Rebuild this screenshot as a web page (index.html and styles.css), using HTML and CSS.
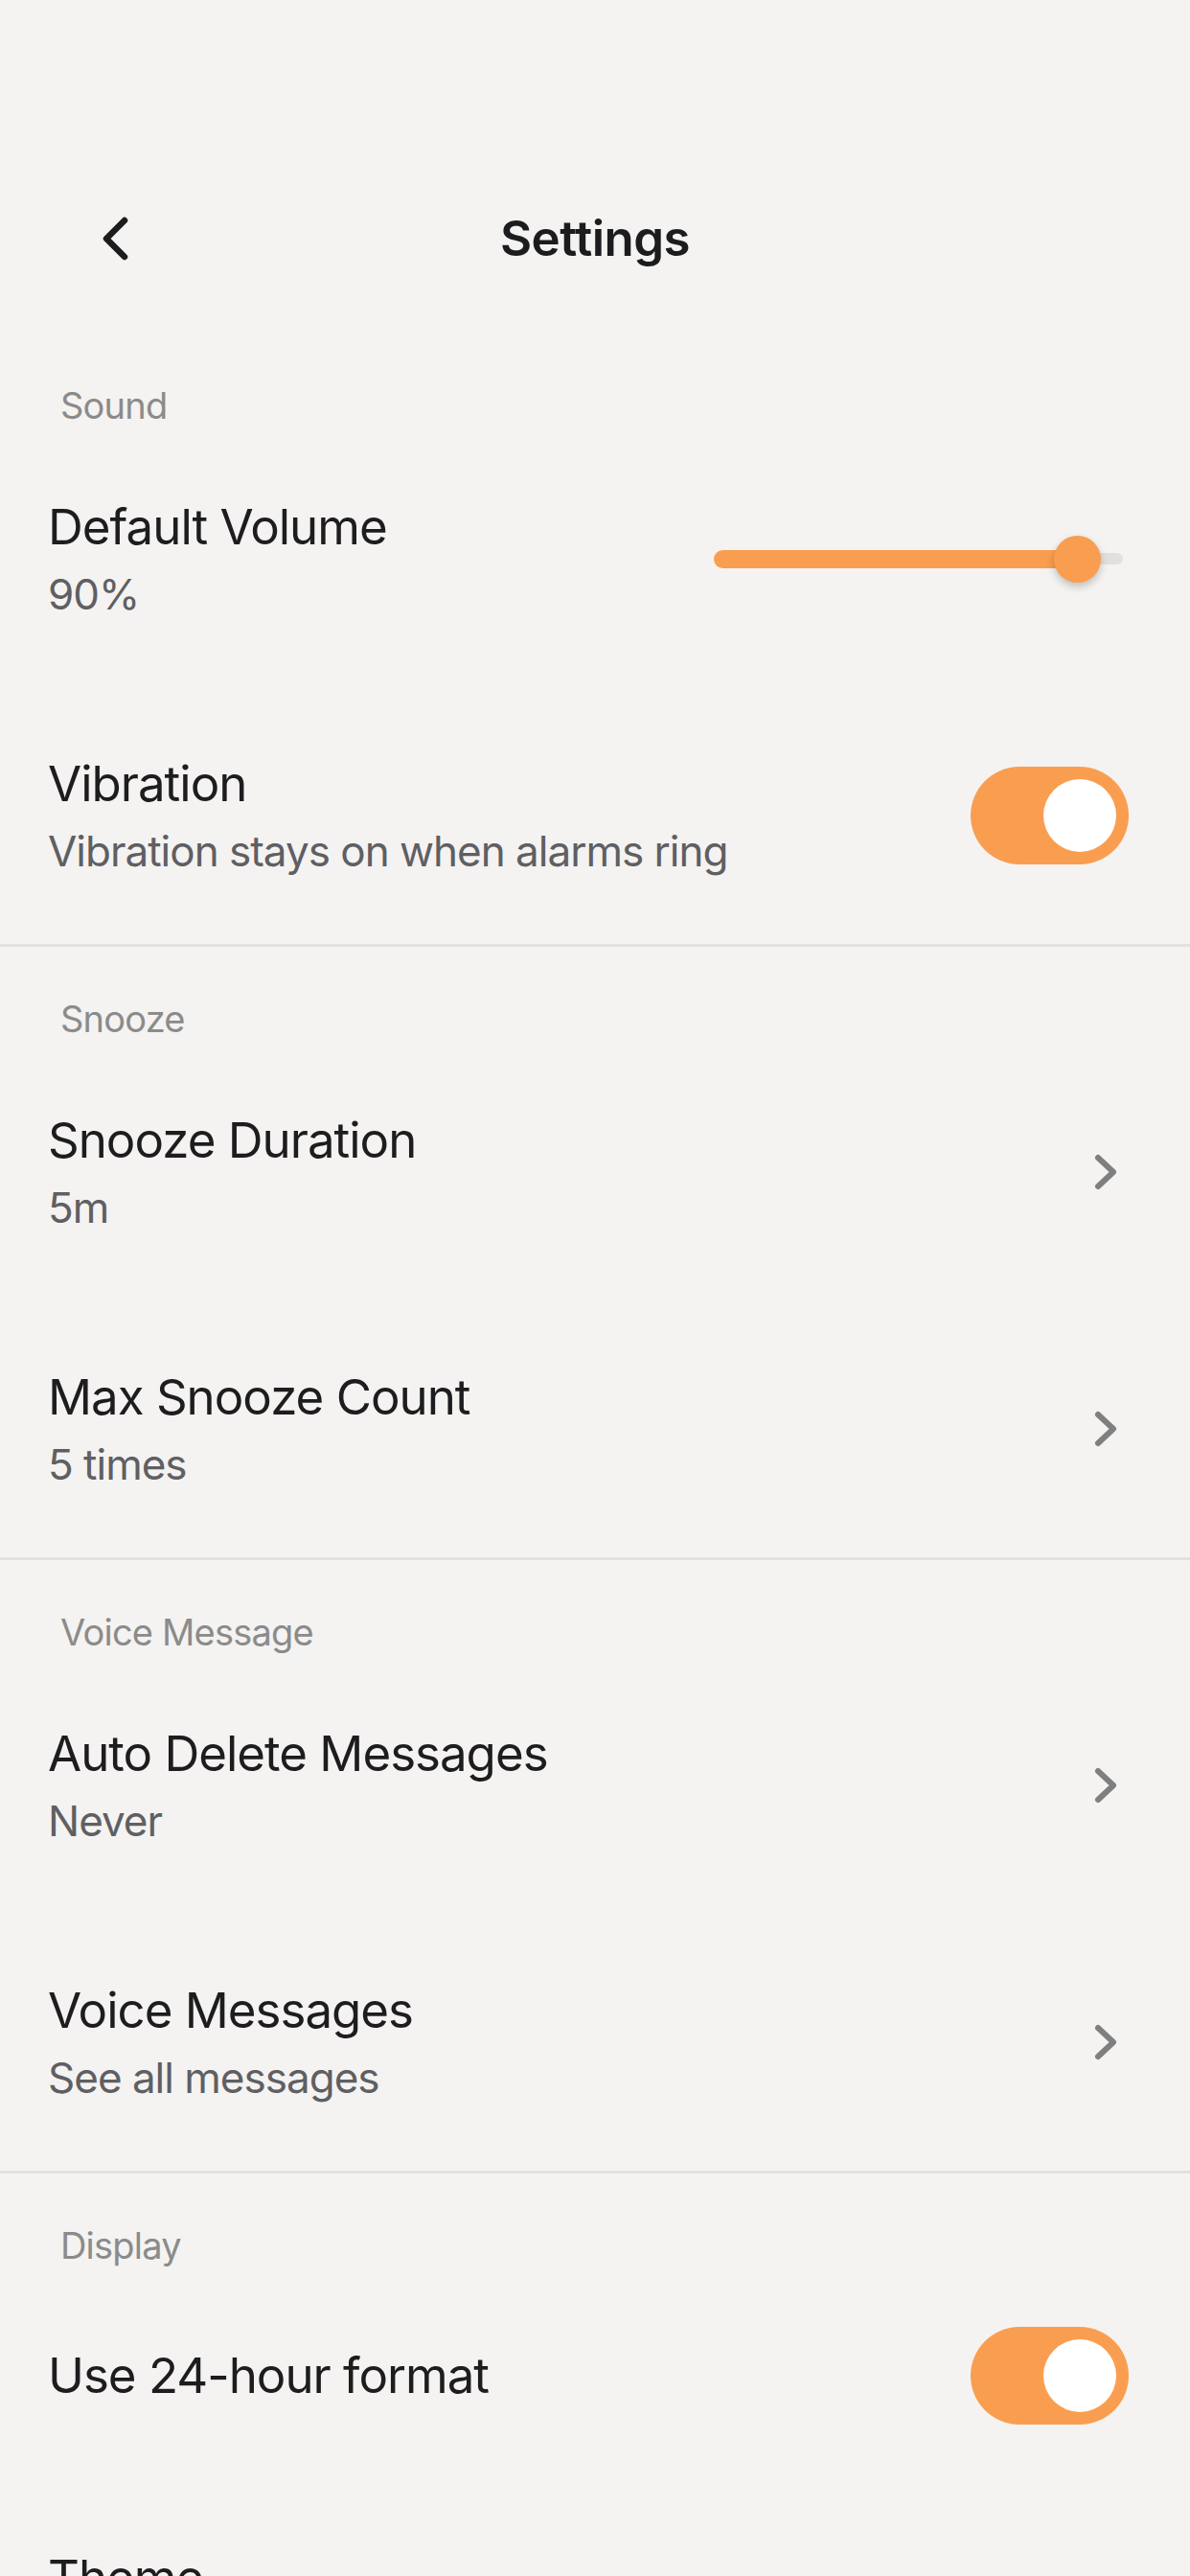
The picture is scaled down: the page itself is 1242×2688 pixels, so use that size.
FILE: index.html
```html
<!DOCTYPE html>
<html lang="en">
<head>
<meta charset="utf-8">
<title>Settings</title>
<link rel="stylesheet" href="styles.css">
</head>
<body>
<div class="screen">
  <header class="navbar">
    <button class="back" aria-label="Back">
      <svg width="48" height="48" viewBox="0 0 48 48"><path d="M34 5 L15 24 L34 43" fill="none" stroke="#1c1c1e" stroke-width="6.5" stroke-linecap="round" stroke-linejoin="round"/></svg>
    </button>
    <h1 class="nav-title">Settings</h1>
    <span class="nav-spacer"></span>
  </header>

  <section class="group">
    <div class="group-label">Sound</div>
    <div class="row">
      <div class="row-text">
        <div class="row-title">Default Volume</div>
        <div class="row-sub">90%</div>
      </div>
      <div class="slider">
        <div class="slider-track"></div>
        <div class="slider-fill" style="width:379px"></div>
        <div class="slider-thumb" style="left:355px"></div>
      </div>
    </div>
    <div class="row">
      <div class="row-text">
        <div class="row-title">Vibration</div>
        <div class="row-sub">Vibration stays on when alarms ring</div>
      </div>
      <div class="toggle on"><span class="knob"></span></div>
    </div>
  </section>

  <section class="group">
    <div class="group-label">Snooze</div>
    <div class="row">
      <div class="row-text">
        <div class="row-title">Snooze Duration</div>
        <div class="row-sub">5m</div>
      </div>
      <svg class="chevron" width="48" height="48" viewBox="0 0 48 48"><path d="M16 9 L32 24 L16 39" fill="none" stroke="#7f7f7f" stroke-width="6" stroke-linecap="round" stroke-linejoin="round"/></svg>
    </div>
    <div class="row">
      <div class="row-text">
        <div class="row-title">Max Snooze Count</div>
        <div class="row-sub">5 times</div>
      </div>
      <svg class="chevron" width="48" height="48" viewBox="0 0 48 48"><path d="M16 9 L32 24 L16 39" fill="none" stroke="#7f7f7f" stroke-width="6" stroke-linecap="round" stroke-linejoin="round"/></svg>
    </div>
  </section>

  <section class="group">
    <div class="group-label">Voice Message</div>
    <div class="row">
      <div class="row-text">
        <div class="row-title">Auto Delete Messages</div>
        <div class="row-sub">Never</div>
      </div>
      <svg class="chevron" width="48" height="48" viewBox="0 0 48 48"><path d="M16 9 L32 24 L16 39" fill="none" stroke="#7f7f7f" stroke-width="6" stroke-linecap="round" stroke-linejoin="round"/></svg>
    </div>
    <div class="row">
      <div class="row-text">
        <div class="row-title">Voice Messages</div>
        <div class="row-sub">See all messages</div>
      </div>
      <svg class="chevron" width="48" height="48" viewBox="0 0 48 48"><path d="M16 9 L32 24 L16 39" fill="none" stroke="#7f7f7f" stroke-width="6" stroke-linecap="round" stroke-linejoin="round"/></svg>
    </div>
  </section>

  <section class="group last">
    <div class="group-label">Display</div>
    <div class="row compact">
      <div class="row-text">
        <div class="row-title">Use 24-hour format</div>
      </div>
      <div class="toggle on"><span class="knob"></span></div>
    </div>
    <div class="row">
      <div class="row-text">
        <div class="row-title">Theme</div>
        <div class="row-sub">System</div>
      </div>
      <svg class="chevron" width="48" height="48" viewBox="0 0 48 48"><path d="M16 9 L32 24 L16 39" fill="none" stroke="#7f7f7f" stroke-width="6" stroke-linecap="round" stroke-linejoin="round"/></svg>
    </div>
  </section>
</div>
</body>
</html>
```

FILE: styles.css
```css
* { box-sizing: border-box; }

html, body {
  margin: 0;
  padding: 0;
  background: #f4f3f1;
}

body {
  font-family: "Inter", "Noto Sans", "Liberation Sans", sans-serif;
  color: #1d1d1f;
  width: 1242px;
  height: 2688px;
  overflow: hidden;
}

.screen {
  display: flex;
  flex-direction: column;
}

/* Navigation bar */
.navbar {
  display: grid;
  grid-template-columns: 1fr auto 1fr;
  align-items: center;
  height: 348px;
  padding-top: 150px;
}

.back {
  justify-self: start;
  margin-left: 96px;
  width: 48px;
  height: 48px;
  padding: 0;
  border: 0;
  background: none;
  display: flex;
}

.nav-title {
  margin: 0;
  font-size: 51px;
  font-weight: 600;
  line-height: 62px;
  color: #1c1c1e;
  letter-spacing: -0.5px;
}

/* Groups */
.group {
  border-bottom: 3px solid #e2e1df;
}

.group.last {
  border-bottom: 0;
}

.group-label {
  padding: 52px 0 3px 63px;
  font-size: 38px;
  line-height: 46px;
  color: #8b8b8b;
  letter-spacing: -0.8px;
}

/* Rows */
.row {
  display: flex;
  align-items: center;
  justify-content: space-between;
  min-height: 268px;
  padding: 59px 64px 59px 50px;
}

.row.compact {
  min-height: 0;
}

.row-text {
  display: flex;
  flex-direction: column;
}

.row-title {
  font-size: 51px;
  line-height: 62px;
  color: #1d1d1f;
  letter-spacing: -1px;
}

.row-sub {
  margin-top: 12px;
  font-size: 44px;
  line-height: 54px;
  color: #5f5f63;
  letter-spacing: -1px;
}

.chevron {
  flex: none;
}

/* Slider */
.slider {
  position: relative;
  width: 427px;
  height: 49px;
  margin-right: 6px;
  flex: none;
}

.slider-track {
  position: absolute;
  left: 0;
  right: 0;
  top: 18px;
  height: 12px;
  border-radius: 6px;
  background: #e1e0de;
}

.slider-fill {
  position: absolute;
  left: 0;
  top: 15px;
  height: 19px;
  border-radius: 10px;
  background: #f99e50;
}

.slider-thumb {
  position: absolute;
  top: 0;
  width: 49px;
  height: 49px;
  border-radius: 50%;
  background: #f99e50;
  box-shadow: 0 4px 8px rgba(0, 0, 0, 0.22);
}

/* Toggle */
.toggle {
  flex: none;
  display: flex;
  align-items: center;
  width: 165px;
  height: 102px;
  padding: 13px;
  border-radius: 51px;
  background: #f99e50;
}

.toggle.on {
  justify-content: flex-end;
}

.knob {
  width: 76px;
  height: 76px;
  border-radius: 50%;
  background: #ffffff;
}
```
